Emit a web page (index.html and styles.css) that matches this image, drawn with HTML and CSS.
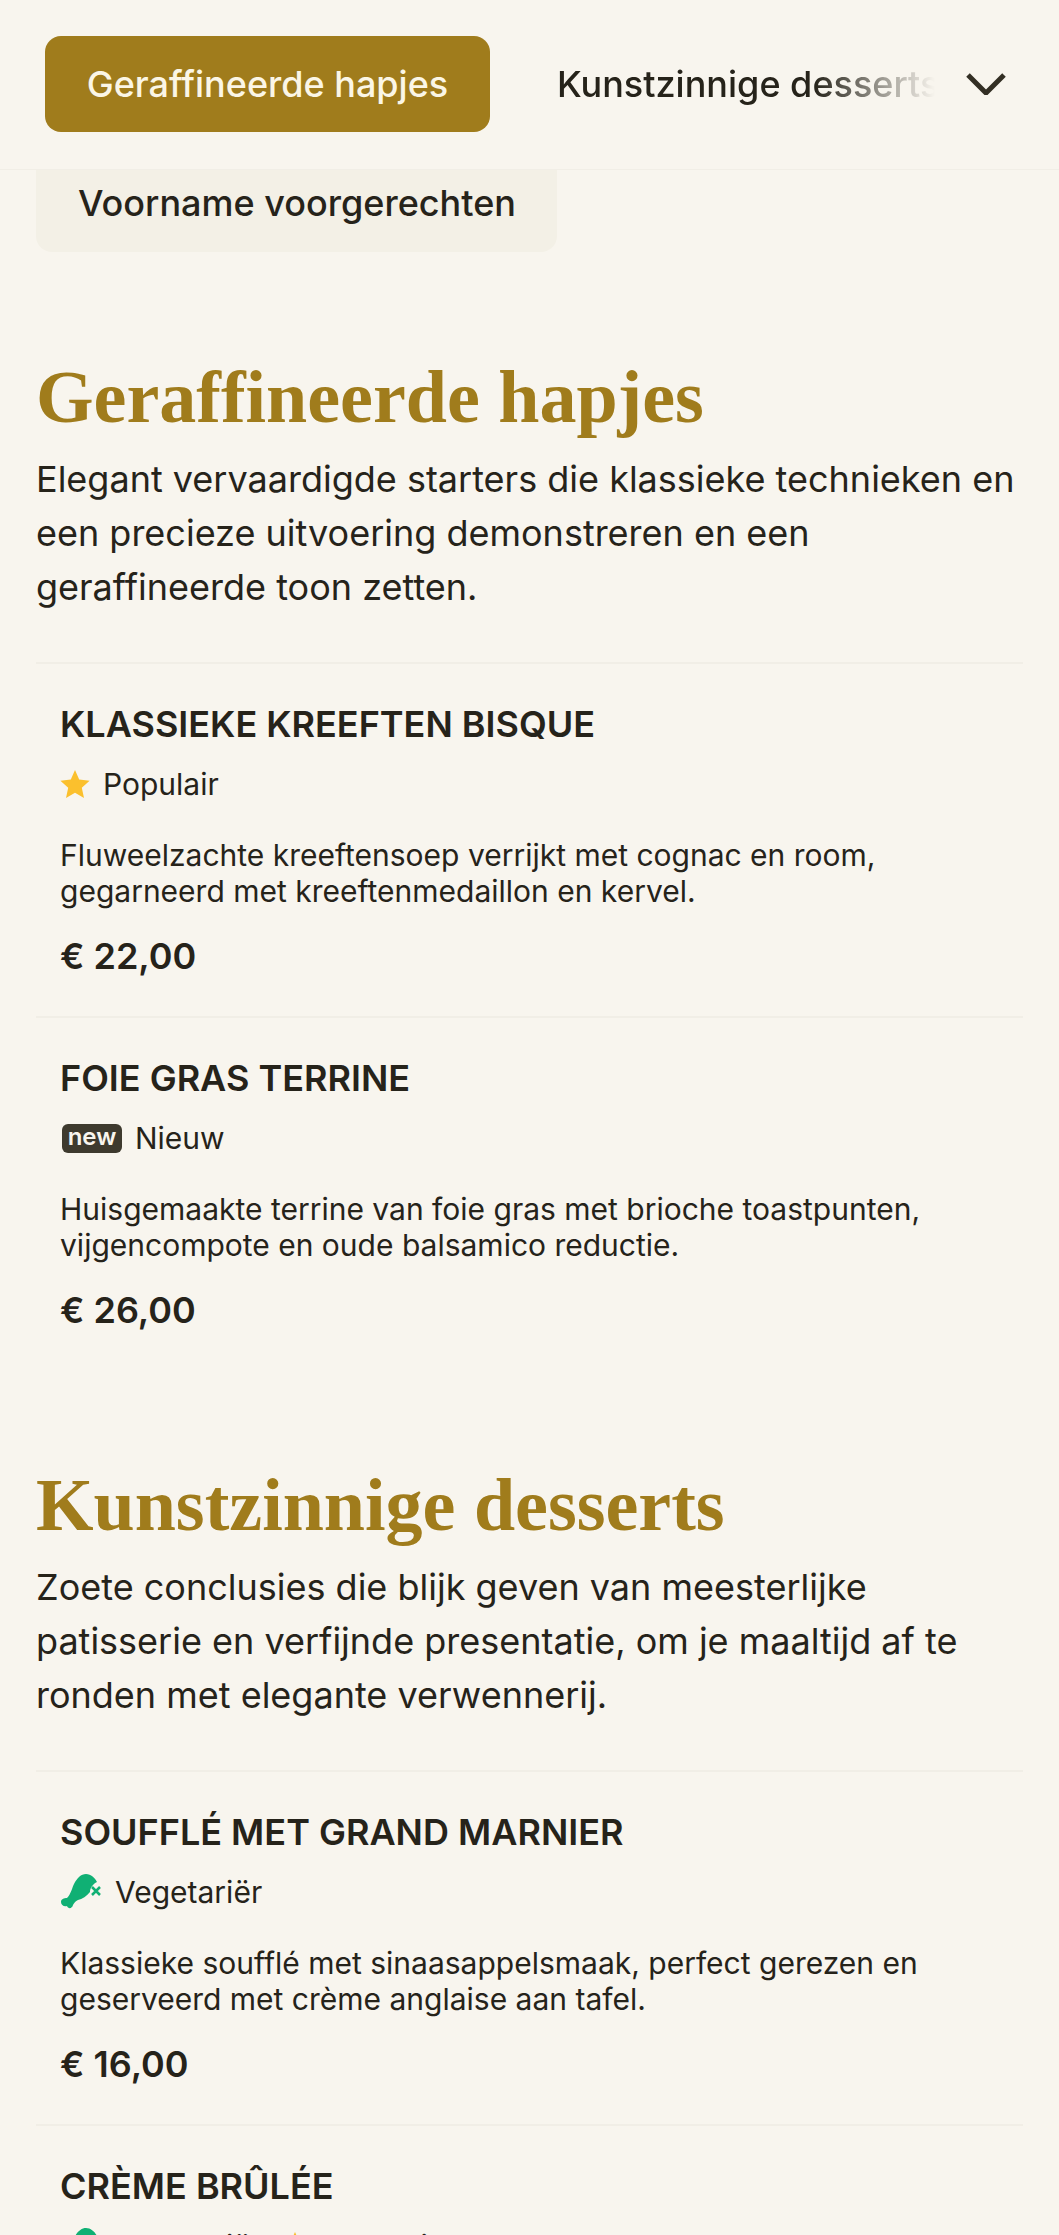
FILE: index.html
```html
<!DOCTYPE html>
<html>
    <head>
        <meta charset="utf-8">
        <title>Menu</title>
        <link rel="stylesheet" href="styles.css">
    </head>
    <body>
        <div class="tabs">
            <a class="tab active" href="#">Geraffineerde hapjes</a>
            <a class="tab next" href="#">Kunstzinnige desserts</a>
            <svg class="chevron" viewBox="0 0 40 22" width="40" height="22">
                <path d="M2 2 L20 20 L38 2" fill="none" stroke="#332f24" stroke-width="5"/>
            </svg>
        </div>
        <a class="tab-more" href="#">Voorname voorgerechten</a>

        <div class="section first">
            <h2>Geraffineerde hapjes</h2>
            <p class="intro">Elegant vervaardigde starters die klassieke technieken en een precieze uitvoering demonstreren en een geraffineerde toon zetten.</p>
            <div class="item">
                <h3>KLASSIEKE KREEFTEN BISQUE</h3>
                <div class="tags">
                    <span class="tag">
                        <svg class="star" viewBox="0 0 30 30" width="30" height="30"><path d="M15 1 L19.2 10.6 L29.6 11.7 L21.8 18.7 L24 29 L15 23.7 L6 29 L8.2 18.7 L0.4 11.7 L10.8 10.6 Z" fill="#fbc02d"/></svg>
                        Populair
                    </span>
                </div>
                <p class="desc">Fluweelzachte kreeftensoep verrijkt met cognac en room, gegarneerd met kreeftenmedaillon en kervel.</p>
                <div class="price">€ 22,00</div>
            </div>
            <div class="item">
                <h3>FOIE GRAS TERRINE</h3>
                <div class="tags">
                    <span class="tag"><span class="new">new</span> Nieuw</span>
                </div>
                <p class="desc">Huisgemaakte terrine van foie gras met brioche toastpunten, vijgencompote en oude balsamico reductie.</p>
                <div class="price">€ 26,00</div>
            </div>
        </div>

        <div class="section">
            <h2>Kunstzinnige desserts</h2>
            <p class="intro">Zoete conclusies die blijk geven van meesterlijke patisserie en verfijnde presentatie, om je maaltijd af te ronden met elegante verwennerij.</p>
            <div class="item">
                <h3>SOUFFLÉ MET GRAND MARNIER</h3>
                <div class="tags">
                    <span class="tag">
                        <svg class="leg" viewBox="0 0 41 36" width="41" height="36">
                            <path d="M7 24 C11 20 12 14 14 10 C17 4 21 0 26 0 C31 0 35 4 37 8 C33 10 30 14 30 18 C27 22 22 25 18 26 C14 28 14 30 13 31 C12 35 8 35 7 32 C4 33 1 31 1 28 C1 25 4 24 7 24 Z" fill="#10b074"/>
                            <path d="M32 13 L40 21 M40 13 L32 21" stroke="#10b074" stroke-width="2.5" fill="none"/>
                        </svg>
                        Vegetariër
                    </span>
                </div>
                <p class="desc">Klassieke soufflé met sinaasappelsmaak, perfect gerezen en geserveerd met crème anglaise aan tafel.</p>
                <div class="price">€ 16,00</div>
            </div>
            <div class="item">
                <h3>CRÈME BRÛLÉE</h3>
                <div class="tags">
                    <span class="tag">
                        <svg class="leg" viewBox="0 0 41 36" width="41" height="36">
                            <path d="M7 24 C11 20 12 14 14 10 C17 4 21 0 26 0 C31 0 35 4 37 8 C33 10 30 14 30 18 C27 22 22 25 18 26 C14 28 14 30 13 31 C12 35 8 35 7 32 C4 33 1 31 1 28 C1 25 4 24 7 24 Z" fill="#10b074"/>
                            <path d="M32 13 L40 21 M40 13 L32 21" stroke="#10b074" stroke-width="2.5" fill="none"/>
                        </svg>
                        Vegetariër
                    </span>
                    <span class="tag">
                        <svg class="star" viewBox="0 0 30 30" width="30" height="30"><path d="M15 1 L19.2 10.6 L29.6 11.7 L21.8 18.7 L24 29 L15 23.7 L6 29 L8.2 18.7 L0.4 11.7 L10.8 10.6 Z" fill="#fbc02d"/></svg>
                        Populair
                    </span>
                </div>
            </div>
        </div>
    </body>
</html>
```

FILE: styles.css
```css
html, body{
    margin: 0;
    padding: 0;
    height: 2235px;
    overflow: hidden;
}
body{
    background: #f8f5ee;
    color: #26231a;
    font-family: Inter, "Liberation Sans", sans-serif;
}
h2,h3,p{
    margin: 0;
    padding: 0;
}
a{
    text-decoration: none;
    color: #26231a;
}

.tabs{
    display: flex;
    align-items: center;
    height: 170px;
    box-sizing: border-box;
    border-bottom: 1px solid #f1eee6;
    padding: 0 0 1px 45px;
}
.tab{
    font-size: 36px;
    font-weight: 500;
    line-height: 96px;
    white-space: nowrap;
}
.tab.active{
    width: 445px;
    text-align: center;
    background: #a07c1c;
    color: #fbf6e6;
    border-radius: 16px;
}
.tab.next{
    margin-left: 67px;
    width: 378px;
    overflow: hidden;
    -webkit-mask-image: linear-gradient(to right, #000 68%, transparent 100%);
    mask-image: linear-gradient(to right, #000 68%, transparent 100%);
}
.chevron{
    margin-left: 31px;
}
.tab-more{
    display: block;
    margin-left: 36px;
    width: 521px;
    height: 82px;
    box-sizing: border-box;
    padding-left: 42px;
    font-size: 36px;
    font-weight: 500;
    line-height: 67px;
    background: #f3f0e6;
    border-radius: 0 0 16px 16px;
}

.section{
    padding: 0 36px;
    margin-top: 92px;
}
.section.first{
    margin-top: 102px;
}
h2{
    font-family: "Liberation Serif", serif;
    font-size: 74px;
    line-height: 86px;
    color: #a07c1c;
}
.intro{
    font-size: 36px;
    line-height: 54px;
    margin-top: 12px;
    margin-bottom: 48px;
}
.item{
    border-top: 2px solid #f1eee6;
    padding: 38px 24px;
}
h3{
    font-size: 36px;
    line-height: 44px;
    font-weight: 600;
}
.tags{
    display: flex;
    gap: 18px;
    margin-top: 18px;
    height: 40px;
}
.tag{
    display: flex;
    align-items: center;
    gap: 13px;
    font-size: 30px;
    line-height: 40px;
}
.leg{
    margin-right: 1px;
}
.new{
    margin-left: 2px;
    width: 60px;
    height: 29px;
    line-height: 26px;
    text-align: center;
    background: #3e3a2e;
    color: #f8f5ee;
    border-radius: 6px;
    font-size: 24px;
    font-weight: 600;
}
.desc{
    font-size: 30px;
    line-height: 36px;
    margin-top: 33px;
}
.price{
    font-size: 36px;
    font-weight: 600;
    line-height: 44px;
    margin-top: 25px;
}
```
